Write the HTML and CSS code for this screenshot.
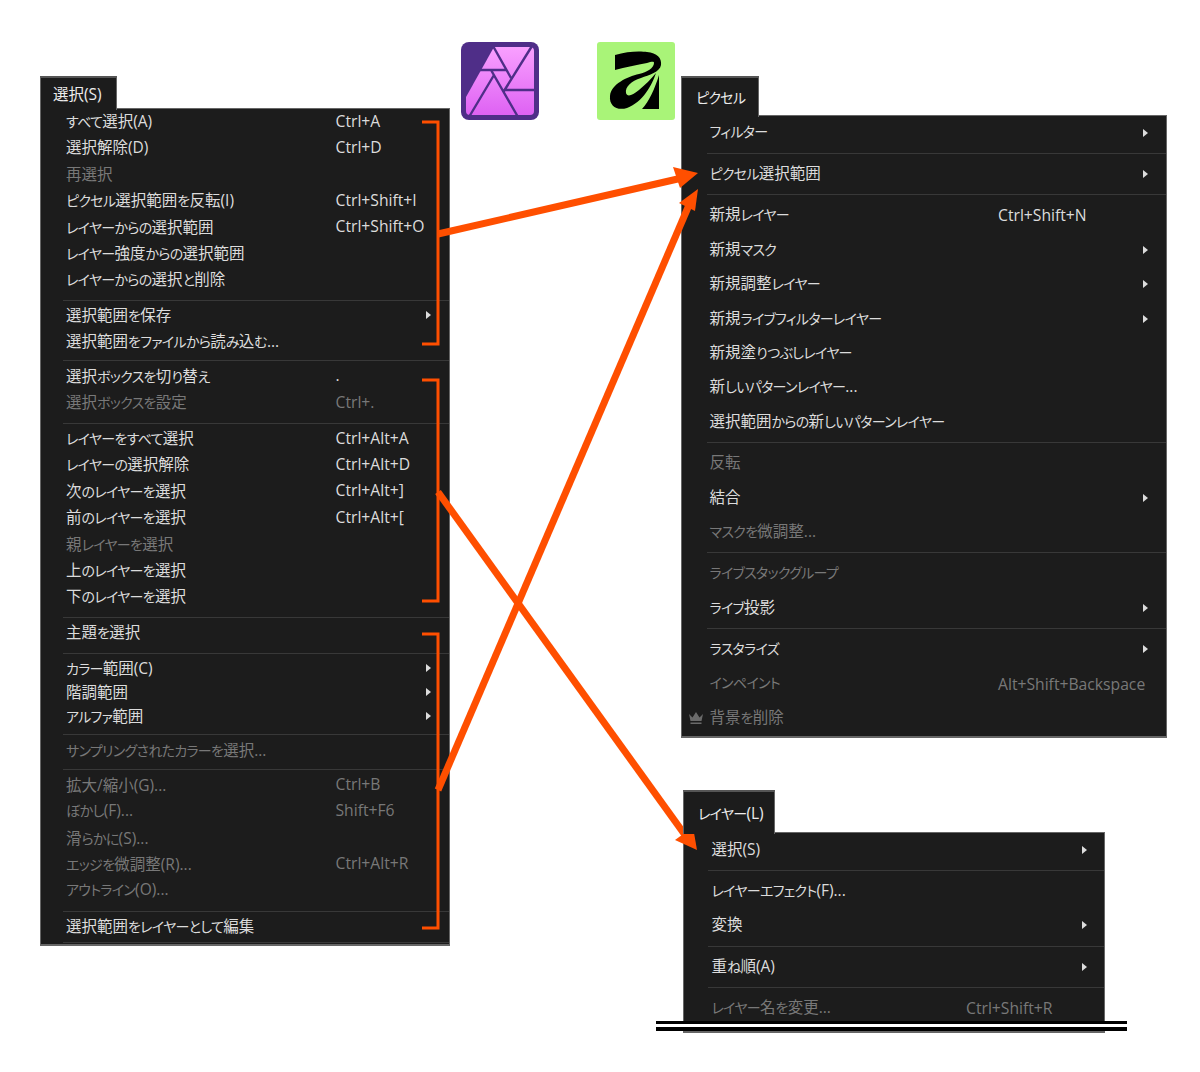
FILE: index.html
```html
<!DOCTYPE html>
<html lang="ja">
<head>
<meta charset="UTF-8">
<title>Affinity メニュー比較</title>
<link rel="stylesheet" href="styles.css">
</head>
<body>
  <div class="canvas">

    <!-- app logos -->
    <svg class="logo logo-photo" viewBox="0 0 78 78">
      <defs>
        <linearGradient id="pinkFill" x1="0" y1="0" x2="0" y2="1">
          <stop offset="0" stop-color="#f9a0ff"/>
          <stop offset="1" stop-color="#de62f3"/>
        </linearGradient>
      </defs>
      <rect width="78" height="78" rx="8" fill="#4f2e88"/>
      <path d="M33 5H69Q73 5 73 9V69Q73 73 69 73H9Q5 73 5 69V55Z" fill="url(#pinkFill)"/>
      <path d="M32 4L50 36M19 28H45M71 4L43 49M43 48H75M30 28L57 75M8 75L33 33" fill="none" stroke="#4f2e88" stroke-width="2.400"/>
    </svg>
    <svg class="logo logo-green" viewBox="0 0 78 78">
      <rect width="78" height="78" rx="3" fill="#a9f478"/>
      <path d="M18 13C30 9 44 9 50 10C60 11 65 16 64 23C63 30 52 33 44 36C34 39 28 45 29 51C30 55 35 54 42 48C48 43 54 37 59 31C55 43 46 60 30 66C20 69 12 64 13 54C14 42 30 35 42 32C50 30 57 26 57 21C57 19 54 20 50 21C40 23 28 25 18 28Z"/>
      <path d="M62 33V67H45C52 60 58 46 62 33Z"/>
    </svg>

    <!-- 選択 menu -->
    <div class="menu menu-select">
      <div class="tab">選択(S)</div>
      <div class="panel">
        <div class="row"><span><i class="k">すべて</i>選択(A)</span><span>Ctrl+A</span></div>
        <div class="row"><span>選択解除(D)</span><span>Ctrl+D</span></div>
        <div class="row off"><span>再選択</span></div>
        <div class="row"><span><i class="k">ピクセル</i>選択範囲<i class="k">を</i>反転(I)</span><span>Ctrl+Shift+I</span></div>
        <div class="row"><span><i class="k">レイヤーからの</i>選択範囲</span><span>Ctrl+Shift+O</span></div>
        <div class="row"><span><i class="k">レイヤー</i>強度<i class="k">からの</i>選択範囲</span></div>
        <div class="row"><span><i class="k">レイヤーからの</i>選択<i class="k">と</i>削除</span></div>
        <div class="sep"></div>
        <div class="row short"><span>選択範囲<i class="k">を</i>保存</span><span></span><i class="arrow"></i></div>
        <div class="row short"><span>選択範囲<i class="k">をファイルから</i>読<i class="k">み</i>込<i class="k">む</i>...</span></div>
        <div class="sep"></div>
        <div class="row"><span>選択<i class="k">ボックスを</i>切<i class="k">り</i>替<i class="k">え</i></span><span>.</span></div>
        <div class="row off"><span>選択<i class="k">ボックスを</i>設定</span><span>Ctrl+.</span></div>
        <div class="sep"></div>
        <div class="row"><span><i class="k">レイヤーをすべて</i>選択</span><span>Ctrl+Alt+A</span></div>
        <div class="row"><span><i class="k">レイヤーの</i>選択解除</span><span>Ctrl+Alt+D</span></div>
        <div class="row"><span>次<i class="k">のレイヤーを</i>選択</span><span>Ctrl+Alt+]</span></div>
        <div class="row"><span>前<i class="k">のレイヤーを</i>選択</span><span>Ctrl+Alt+[</span></div>
        <div class="row off"><span>親<i class="k">レイヤーを</i>選択</span></div>
        <div class="row"><span>上<i class="k">のレイヤーを</i>選択</span></div>
        <div class="row"><span>下<i class="k">のレイヤーを</i>選択</span></div>
        <div class="sep"></div>
        <div class="row solo"><span>主題<i class="k">を</i>選択</span></div>
        <div class="sep"></div>
        <div class="row tight"><span><i class="k">カラー</i>範囲(C)</span><span></span><i class="arrow"></i></div>
        <div class="row tight"><span>階調範囲</span><span></span><i class="arrow"></i></div>
        <div class="row tight"><span><i class="k">アルファ</i>範囲</span><span></span><i class="arrow"></i></div>
        <div class="sep"></div>
        <div class="row short off"><span><i class="k">サンプリングされたカラーを</i>選択...</span></div>
        <div class="sep"></div>
        <div class="row off"><span>拡大/縮小(G)...</span><span>Ctrl+B</span></div>
        <div class="row off"><span><i class="k">ぼかし</i>(F)...</span><span>Shift+F6</span></div>
        <div class="row off"><span>滑<i class="k">らかに</i>(S)...</span></div>
        <div class="row off"><span><i class="k">エッジを</i>微調整(R)...</span><span>Ctrl+Alt+R</span></div>
        <div class="row off"><span><i class="k">アウトライン</i>(O)...</span></div>
        <div class="sep"></div>
        <div class="row solo"><span>選択範囲<i class="k">をレイヤーとして</i>編集</span></div>
        <div class="sep"></div>
      </div>
    </div>

    <!-- ピクセル menu -->
    <div class="menu menu-pixel">
      <div class="tab"><i class="k">ピクセル</i></div>
      <div class="panel">
        <div class="row"><span><i class="k">フィルター</i></span><span></span><i class="arrow"></i></div>
        <div class="sep"></div>
        <div class="row"><span><i class="k">ピクセル</i>選択範囲</span><span></span><i class="arrow"></i></div>
        <div class="sep"></div>
        <div class="row"><span>新規<i class="k">レイヤー</i></span><span>Ctrl+Shift+N</span></div>
        <div class="row"><span>新規<i class="k">マスク</i></span><span></span><i class="arrow"></i></div>
        <div class="row"><span>新規調整<i class="k">レイヤー</i></span><span></span><i class="arrow"></i></div>
        <div class="row"><span>新規<i class="k">ライブフィルターレイヤー</i></span><span></span><i class="arrow"></i></div>
        <div class="row"><span>新規塗<i class="k">りつぶしレイヤー</i></span></div>
        <div class="row"><span>新<i class="k">しいパターンレイヤー</i>...</span></div>
        <div class="row"><span>選択範囲<i class="k">からの</i>新<i class="k">しいパターンレイヤー</i></span></div>
        <div class="sep"></div>
        <div class="row off"><span>反転</span></div>
        <div class="row"><span>結合</span><span></span><i class="arrow"></i></div>
        <div class="row off"><span><i class="k">マスクを</i>微調整...</span></div>
        <div class="sep"></div>
        <div class="row off"><span><i class="k">ライブスタックグループ</i></span></div>
        <div class="row"><span><i class="k">ライブ</i>投影</span><span></span><i class="arrow"></i></div>
        <div class="sep"></div>
        <div class="row"><span><i class="k">ラスタライズ</i></span><span></span><i class="arrow"></i></div>
        <div class="row off"><span><i class="k">インペイント</i></span><span>Alt+Shift+Backspace</span></div>
        <div class="row off">
          <svg class="crown" viewBox="0 0 16 14"><path d="M1 3L4.500 6.500L8 1L11.500 6.500L15 3L13.500 10H2.500Z M2.500 11.500H13.500V13H2.500Z"/></svg>
          <span>背景<i class="k">を</i>削除</span>
        </div>
      </div>
    </div>

    <!-- レイヤー menu, cut off at the bottom -->
    <div class="menu menu-layer">
      <div class="tab"><span><i class="k">レイヤー</i>(L)</span></div>
      <div class="panel">
        <div class="row"><span>選択(S)</span><span></span><i class="arrow"></i></div>
        <div class="sep"></div>
        <div class="row"><span><i class="k">レイヤーエフェクト</i>(F)...</span></div>
        <div class="row"><span>変換</span><span></span><i class="arrow"></i></div>
        <div class="sep"></div>
        <div class="row"><span>重<i class="k">ね</i>順(A)</span><span></span><i class="arrow"></i></div>
        <div class="sep"></div>
        <div class="row off"><span><i class="k">レイヤー</i>名<i class="k">を</i>変更...</span><span>Ctrl+Shift+R</span></div>
      </div>
    </div>
    <div class="cut-mark"></div>

    <!-- orange annotations -->
    <svg class="marks" viewBox="0 0 1200 1072">
      <path class="bracket" d="M422 122H438V344H422M422 380H438V601H422M422 634H438V928H422"/>
      <line class="shaft" x1="438" y1="234" x2="682" y2="178"/>
      <polygon class="head" points="673,167 698,173 680,188"/>
      <line class="shaft" x1="438" y1="790" x2="689" y2="205"/>
      <polygon class="head" points="698,189 679,203 695,211"/>
      <line class="shaft" x1="438" y1="492" x2="685" y2="835"/>
      <polygon class="head" points="697,850 675,840 693,827"/>
    </svg>

  </div>
</body>
</html>
```

FILE: styles.css
```css
body {
  margin: 0;
  background-color: #fff;
  font-family: "Open Sans", "Noto Sans CJK JP", sans-serif;
}
.canvas {
  position: relative;
  width: 1200px;
  height: 1072px;
  overflow: hidden;
}

/* logos */
.logo {
  position: absolute;
  top: 42px;
  width: 78px;
  height: 78px;
}
.logo-photo {
  left: 461px;
}
.logo-green {
  left: 597px;
}

/* menus */
.menu {
  position: absolute;
  color: #dcdcdc;
  font-size: 15.500px;
  font-feature-settings: "palt";
}
/* kana is set smaller and tighter than kanji */
.k {
  font-style: normal;
  font-size: 14px;
  letter-spacing: -0.700px;
}
.tab {
  position: relative;
  z-index: 1;
  box-sizing: border-box;
  margin-bottom: -2px;
  padding-bottom: 1px;
  background-color: #1c1c1c;
  border: 1px solid #666;
  border-top: 2px solid #555;
  border-bottom: none;
  display: flex;
  align-items: center;
  color: #ececec;
}
.panel {
  box-sizing: border-box;
  background-color: #1c1c1c;
  border: 1px solid #666;
  border-bottom-width: 2px;
}
.row {
  position: relative;
  box-sizing: border-box;
  display: grid;
  align-items: center;
  white-space: nowrap;
}
.row > span + span {
  font-size: 15.700px;
}
.row.off {
  color: #787878;
}
.sep {
  height: 1px;
  background-color: #383838;
}
.arrow {
  width: 0;
  height: 0;
  border-left: 5px solid #dcdcdc;
  border-top: 4px solid transparent;
  border-bottom: 4px solid transparent;
}
.crown {
  position: absolute;
  left: 6px;
  top: 10px;
  width: 16px;
  height: 14px;
  fill: #6a6a6a;
}

.menu-select {
  left: 40px;
  top: 76px;
  width: 410px;
}
.menu-select .tab {
  width: 77px;
  height: 34px;
  padding-left: 12px;
}
.menu-select .panel {
  height: 838px;
}
.menu-select .row {
  grid-template-columns: 269.500px 90px 12px;
  height: 26.400px;
  padding-left: 25px;
  padding-bottom: 6px;
}
.menu-select .row.short {
  height: 25.500px;
}
.menu-select .row.solo {
  height: 26.500px;
}
.menu-select .row.tight {
  height: 24px;
}
.menu-select .sep {
  margin: 6px 0 2.500px 22px;
}
.menu-select .sep:last-child {
  margin: 1px 0 0 22px;
}

.menu-pixel {
  left: 681px;
  top: 76px;
  width: 486px;
}
.menu-pixel .tab {
  width: 78px;
  height: 41px;
  padding-left: 14px;
}
.menu-pixel .panel {
  height: 623px;
}
.menu-pixel .row {
  grid-template-columns: 288.500px 145px 12px;
  height: 34.400px;
  padding-left: 27.500px;
  padding-bottom: 4px;
}
.menu-pixel .sep {
  margin: 2.500px 0 3.500px 25px;
}

.menu-layer {
  left: 683px;
  top: 790px;
  width: 422px;
}
.menu-layer .tab {
  width: 92px;
  height: 44px;
  padding-left: 14px;
  padding-bottom: 0;
}
.menu-layer .panel {
  height: 201px;
}
.menu-layer .row {
  grid-template-columns: 254.500px 116px 12px;
  height: 34.400px;
  padding-left: 27.500px;
  padding-bottom: 4px;
}
.menu-layer .sep {
  margin: 2.500px 0 3.500px 24px;
}
.menu-pixel .arrow,
.menu-layer .arrow,
.menu-pixel .row > span + span,
.menu-layer .row > span + span {
  margin-top: 3px;
}

/* white band with two black rules where the menu is cut */
.cut-mark {
  position: absolute;
  left: 656px;
  top: 1021px;
  width: 471px;
  height: 10px;
  background: linear-gradient(#000 0 3px, #fff 3px 6px, #000 6px 10px);
}

/* annotations */
.marks {
  position: absolute;
  left: 0;
  top: 0;
  width: 1200px;
  height: 1072px;
  pointer-events: none;
}
.bracket {
  fill: none;
  stroke: #ff4f00;
  stroke-width: 3;
}
.shaft {
  stroke: #ff4f00;
  stroke-width: 7;
}
.head {
  fill: #ff4f00;
}
```
